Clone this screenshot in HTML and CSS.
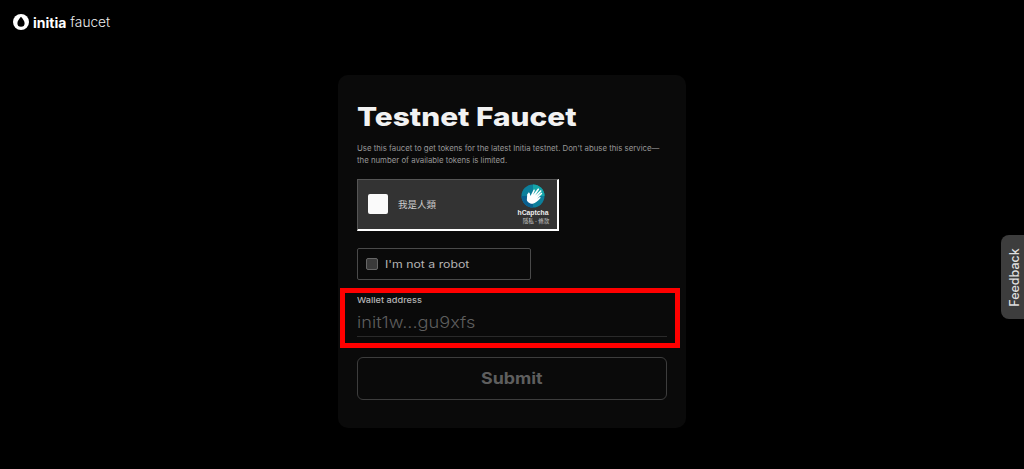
FILE: index.html
```html
<!DOCTYPE html>
<html lang="en">
<head>
<meta charset="utf-8">
<title>initia faucet</title>
<link rel="stylesheet" href="styles.css">
</head>
<body>
<header class="topbar">
  <svg class="logo" viewBox="0 0 16 16" width="16" height="16" aria-hidden="true">
    <circle cx="8" cy="8" r="8" fill="#fff"/>
    <path d="M8 2.800C9.800 5 11.600 7 11.600 9.200a3.600 3.600 0 0 1-7.200 0C4.400 7 6.200 5 8 2.800z" fill="#000"/>
  </svg>
  <span class="brand">initia</span><span class="brand-sub">faucet</span>
</header>
<main class="page">
  <section class="card">
    <h1 class="title">Testnet Faucet</h1>
    <p class="intro">Use this faucet to get tokens for the latest Initia testnet. Don't abuse this service—<br>the number of available tokens is limited.</p>
    <div class="hcaptcha">
      <span class="hc-box"></span>
      <span class="hc-label">我是人類</span>
      <div class="hc-brand">
        <svg class="hc-logo" viewBox="0 0 24 24" width="24" height="24" aria-hidden="true">
          <circle cx="12" cy="12" r="11.500" fill="#0d7f9b"/>
          <path d="M12 .5a11.500 11.500 0 0 1 11.500 11.500H12z" fill="#14a5a8"/>
          <path d="M12 23.500a11.500 11.500 0 0 1-11.500-11.500H12z" fill="#0b5f8f"/>
          <g transform="rotate(28 12 12)">
            <path d="M6 13l2.500 5.500c1 1.500 5 2 7 .5 2-1.800 3-5 4-8.500.2-1-.9-1.300-1.300-.4L17 12.500l2-6.500c.2-1-1-1.400-1.400-.4l-2 5.400 1.600-7c.1-1-1.200-1.300-1.500-.3l-2 6.800.6-7c0-1-1.300-1-1.500 0l-1.300 7.300-.5-4.500c-.2-1-1.400-.8-1.400.2l.2 6.800-2-2.300c-.8-.8-2 0-1.300 1z" fill="#fff"/>
          </g>
        </svg>
        <span class="hc-name">hCaptcha</span>
        <span class="hc-links">隱私 - 條款</span>
      </div>
    </div>
    <label class="robot">
      <span class="robot-box"></span>
      <span class="robot-text">I'm not a robot</span>
    </label>
    <div class="field">
      <div class="field-label"><span class="wide">Wallet address</span></div>
      <div class="field-input"><span class="wide">init1w...gu9xfs</span></div>
    </div>
    <button class="submit" type="button"><span class="wide wide-center">Submit</span></button>
  </section>
</main>
<div class="highlight"></div>
<div class="feedback"><span class="feedback-text">Feedback</span></div>
</body>
</html>
```
FILE: styles.css
```css
* { box-sizing: border-box; }
html, body { margin: 0; padding: 0; height: 100%; overflow: hidden; }
body { background: #000; color: #fff; font-family: "Inter", "Liberation Sans", sans-serif; }

.wide { display: inline-block; transform: scaleX(1.15); transform-origin: left center; white-space: nowrap; }
.wide-center { transform-origin: center; }

.topbar { display: flex; align-items: center; height: 44px; padding: 0 0 0 13px; }
.logo { display: block; margin-right: 4px; }
.brand { font-weight: 700; font-size: 14px; color: #fff; margin-right: 4px; }
.brand-sub { font-weight: 300; font-size: 13.700px; color: #eee; }

.page { display: flex; justify-content: center; padding-top: 31px; }
.card { width: 348px; height: 353px; padding: 26px 19px 0; background: #0a0a0a; border-radius: 10px; }

.title { margin: 0; font-weight: 800; font-size: 26px; line-height: 32px; color: #f2f2f2; white-space: nowrap; transform: scaleX(1.147); transform-origin: left center; }
.intro { margin: 9px 0 0; font-size: 7.800px; line-height: 12px; color: #979797; white-space: nowrap; }

.hcaptcha { display: flex; align-items: center; width: 202px; height: 52px; margin-top: 13px; padding-bottom: 2px; background: #333; border: 1px solid #555; border-right: 2px solid #fff; border-bottom: 2px solid #fff; }
.hc-box { width: 20px; height: 20px; margin-left: 10px; background: #fafafa; border-radius: 2px; }
.hc-label { margin-left: 10px; font-family: "Noto Sans CJK TC", sans-serif; font-size: 9.500px; color: #ccc; flex: 1; }
.hc-brand { display: flex; flex-direction: column; align-items: center; width: 34px; margin-right: 7px; padding-top: 2px; }
.hc-logo { display: block; }
.hc-name { font-family: "Liberation Sans", sans-serif; font-weight: 700; font-size: 6.800px; line-height: 8px; margin-top: 1px; color: #eee; }
.hc-links { font-family: "Noto Sans CJK TC", sans-serif; font-size: 5.500px; line-height: 9px; color: #ccc; white-space: nowrap; margin-left: 6px; }

.robot { display: flex; align-items: center; width: 174px; height: 32px; margin-top: 17px; padding-left: 8px; border: 1px solid #4a4a4a; border-radius: 2px; }
.robot-box { width: 12px; height: 12px; background: #3a3a3a; border: 1px solid #666; border-radius: 2px; }
.robot-text { margin-left: 7px; font-size: 10.500px; color: #b5b5b5; display: inline-block; transform: scaleX(1.17); transform-origin: left center; white-space: nowrap; }

.field { margin-top: 15px; height: 42px; border-bottom: 1px solid #2a2a2a; }
.field-label { font-weight: 500; font-size: 8px; line-height: 10px; color: #b5b5b5; }
.field-input { margin-top: 8px; font-weight: 300; font-size: 15.800px; line-height: 20px; color: #5e5e5e; }

.submit { display: block; width: 310px; height: 43px; margin-top: 20px; background: transparent; border: 1px solid #3d3d3d; border-radius: 6px; color: #5e5e5e; font-family: "Inter", sans-serif; font-weight: 700; font-size: 15.500px; }

.highlight { position: absolute; left: 340px; top: 288px; width: 340px; height: 60px; border: 5px solid #f00; pointer-events: none; }

.feedback { position: fixed; right: 0; top: 235px; width: 23px; height: 84px; padding-left: 3px; display: flex; align-items: center; justify-content: center; background: #3d3d3d; border-radius: 8px 0 0 8px; }
.feedback-text { transform: rotate(-90deg); font-weight: 500; font-size: 12.500px; color: #dedede; white-space: nowrap; }
```
